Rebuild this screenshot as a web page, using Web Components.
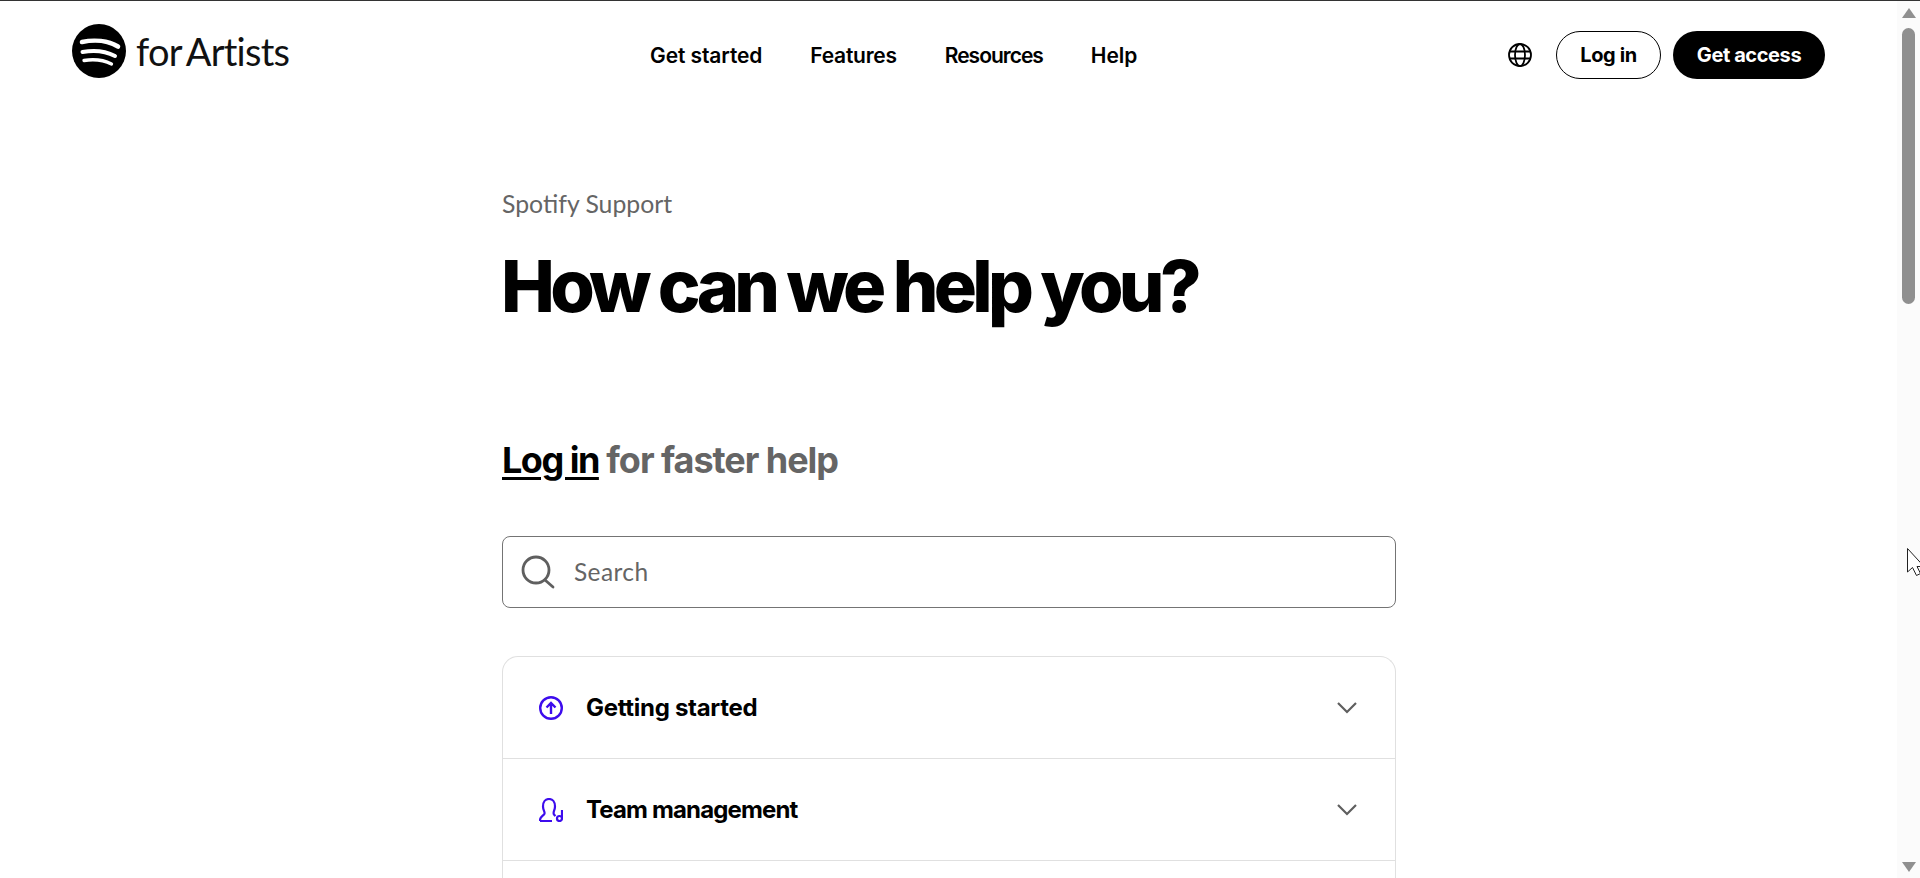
<!DOCTYPE html>
<html lang="en"><head><meta charset="utf-8"><title>Spotify for Artists Support</title>
<style>
html,body{margin:0;height:878px;overflow:hidden;background:#fff}
body{font-family:Inter,"Liberation Sans",sans-serif;color:#000}
</style></head>
<body>
<fa-app>
  <fa-header slot="header"></fa-header>
  <fa-hero></fa-hero>
  <fa-login-line></fa-login-line>
  <fa-search></fa-search>
  <fa-accordion>
    <fa-row icon="up" style="letter-spacing:-.3px">Getting started</fa-row>
    <fa-row icon="team" style="letter-spacing:-.85px">Team management</fa-row>
    <fa-row></fa-row>
  </fa-accordion>
</fa-app>
<script>
function def(name,html,init){
  customElements.define(name,class extends HTMLElement{
    constructor(){super();this.attachShadow({mode:'open'}).innerHTML=html;}
    connectedCallback(){if(init)init(this);}
  });
}
def('fa-app',`<style>
:host{display:flex;flex-direction:column;height:878px;overflow:hidden;position:relative;border-top:1px solid #333;box-sizing:border-box}
.wrap{flex:1;display:flex;min-height:0}
.page{flex:1;min-width:0;display:flex;flex-direction:column;overflow:hidden}
.col{width:894px;margin-left:502px;display:flex;flex-direction:column}
.bar{width:23px;background:#fbfbfb;display:flex;flex-direction:column;align-items:center;position:relative;flex:none}
.arrow{width:0;height:0;border-left:7px solid transparent;border-right:7px solid transparent;margin-top:7px;border-bottom:10px solid #8f8f8f}
.thumb{width:13px;height:276px;background:#8f8f8f;border-radius:7px;margin-top:10px}
.spacer{flex:1}
.down{width:0;height:0;border-left:7px solid transparent;border-right:7px solid transparent;border-top:10px solid #8f8f8f;margin-bottom:6px}
.cursor{position:absolute;left:1907px;top:547px}
</style>
<div class="wrap"><div class="page"><slot name="header"></slot><div class="col"><slot></slot></div></div>
<div class="bar"><div class="arrow"></div><div class="thumb"></div><div class="spacer"></div><div class="down"></div></div></div>
<svg class="cursor" width="13" height="28" viewBox="0 0 13 28"><path d="M.5.5V24L5.500 19.500 9.500 27.500 13.500 25.500 10 18.500H17Z" fill="#fff" stroke="#222" stroke-width="1"/></svg>`);
def('fa-header',`<style>
:host{display:block}
.h{height:108px;display:flex;align-items:center;box-sizing:border-box;padding:0 72px 0 72px}
.logo{display:flex;align-items:center;gap:10px;width:578px;flex:none;align-self:flex-start;margin-top:23px}
.logo svg{display:block}
.word{font:400 38px/1 Lato,sans-serif;letter-spacing:-.75px;word-spacing:-3px;color:#111}
nav{display:flex;gap:48px;font:600 21px/1 Inter,sans-serif;letter-spacing:-.1px;flex:none}
.fea{letter-spacing:-.25px}
.res{letter-spacing:-1px}
.right{margin-left:auto;display:flex;align-items:center}
.globe{display:block;margin-right:24px}
.btn{height:48px;box-sizing:border-box;border-radius:24px;display:flex;align-items:center;justify-content:center;font:700 20px/1 Inter,sans-serif;letter-spacing:-.4px}
.l{width:105px;border:1px solid #000;margin-right:12px}
.g{width:152px;background:#000;color:#fff}
</style><div class="h"><div class="logo"><svg width="54" height="54" viewBox="0 0 54 54" fill="none" stroke="#fff" stroke-linecap="round"><circle cx="27" cy="27" r="27" fill="#000" stroke="none"/><path d="M10 18c12-2.500 26-1.500 36 4.500" stroke-width="4.600"/><path d="M10.500 28c11-2 23-1 32.500 4" stroke-width="4"/><path d="M12 36.500c9.500-1.500 19-.8 27.500 3.500" stroke-width="3.300"/></svg><span class="word">for Artists</span></div>
<nav><span>Get started</span><span class="fea">Features</span><span class="res">Resources</span><span>Help</span></nav>
<div class="right"><svg class="globe" width="24" height="24" viewBox="0 0 24 24" fill="none" stroke="#000" stroke-width="1.800"><circle cx="12" cy="12" r="11"/><ellipse cx="12" cy="12" rx="5" ry="11"/><path d="M1 8.500h22M1 15.500h22"/></svg><div class="btn l">Log in</div><div class="btn g">Get access</div></div></div>`);
def('fa-hero',`<style>
:host{display:block}
.s{font:400 24.800px/28px Lato,sans-serif;color:#656565;margin-top:81px}
h1{font:800 72px/88px Inter,sans-serif;letter-spacing:-4.680px;margin:24px 0 0 -1px}
</style><div class="s">Spotify Support</div><h1>How can we help you?</h1>`);
def('fa-login-line',`<style>
:host{display:block;margin-top:108px;font:700 36px/44px Inter,sans-serif;letter-spacing:-1.050px;color:#656565}
a{color:#000;letter-spacing:-1.500px;text-decoration:underline;text-decoration-thickness:3px;text-underline-offset:4px}
</style><a>Log in</a> for faster help`);
def('fa-search',`<style>
:host{display:flex;align-items:center;box-sizing:border-box;height:72px;margin-top:54px;border:1px solid #747474;border-radius:8px;padding:0 18px}
svg{display:block;flex:none}
span{font:400 24.500px/1 Lato,sans-serif;color:#656565;margin-left:19px;letter-spacing:.4px}
</style><svg width="34" height="34" viewBox="0 0 34 34" fill="none" stroke="#5f5f5f" stroke-width="2.800"><circle cx="15" cy="15" r="13"/><path d="M24 25l8 7" stroke-linecap="round"/></svg><span>Search</span>`);
def('fa-accordion',`<style>
:host{display:block;margin-top:48px;border:1px solid #e0e0e0;border-bottom:0;border-radius:16px 16px 0 0}
</style><slot></slot>`);
const icons={
 up:`<svg width="24" height="24" viewBox="0 0 24 24" fill="none" stroke="#3d0ced" stroke-width="2.400"><circle cx="12" cy="12" r="10.800"/><path d="M12 18V7M7.500 11.500 12 7l4.500 4.500"/></svg>`,
 team:`<svg width="24" height="24" viewBox="0 0 24 24" fill="none" stroke="#3d0ced" stroke-width="2.200"><path d="M1 23v-1c0-3 2-3.500 4-5.500 2-2-1-3.500-1-8C4 4 6.500 1 10 1s6 3 6 7.500c0 4-2.500 5.500-1 8 .5.800 1 1 1.500 1.500M1 23h12"/><circle cx="20.500" cy="20.500" r="2.500"/><path d="M23 20.500V12"/></svg>`
};
def('fa-row',`<style>
:host{display:flex;align-items:center;height:102px;box-sizing:border-box;border-bottom:1px solid #e0e0e0;padding:0 36px 0 36px;letter-spacing:-.45px}
.i{width:24px;height:24px;flex:none}
.t{margin-left:23px;font:700 24px/1 Inter,sans-serif;flex:1;white-space:nowrap}
svg{display:block}
</style><div class="i"></div><div class="t"><slot></slot></div><svg class="c" width="24" height="14" viewBox="0 0 24 14" fill="none" stroke="#5f5f5f" stroke-width="2.200"><path d="M3 2l9 9 9-9"/></svg>`,el=>{
 const k=el.getAttribute('icon');const s=el.shadowRoot;
 if(k)s.querySelector('.i').innerHTML=icons[k];else s.querySelector('.c').style.visibility='hidden';
});
</script>
</body></html>
